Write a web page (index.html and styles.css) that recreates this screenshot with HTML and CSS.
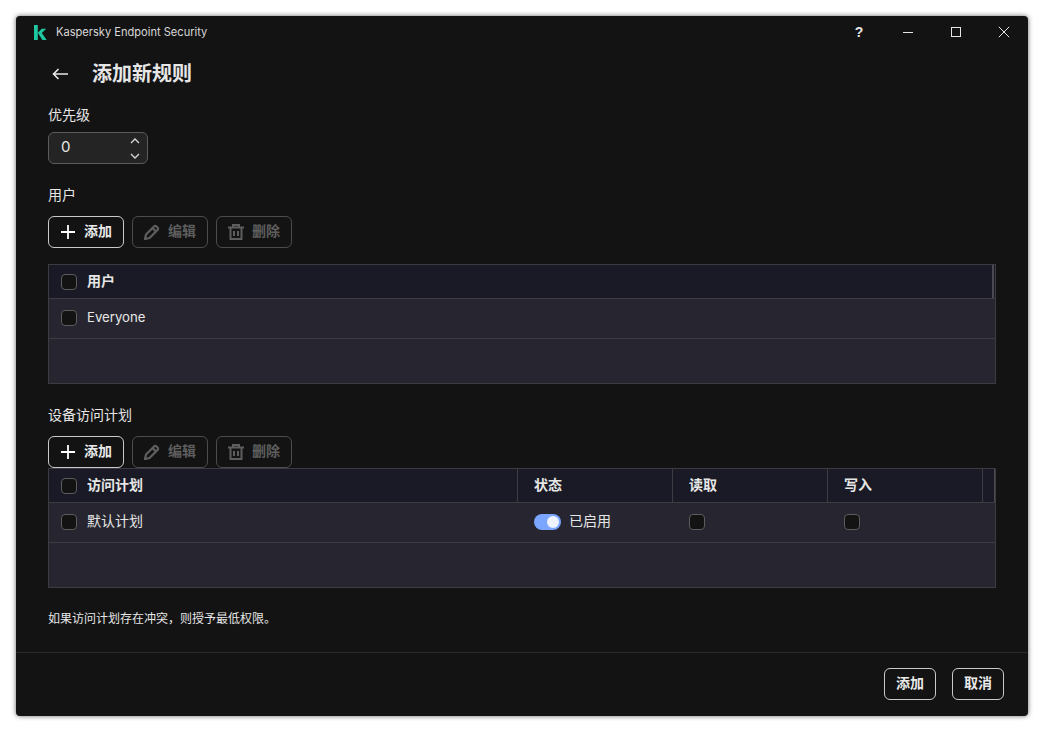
FILE: index.html
```html
<!DOCTYPE html>
<html lang="zh-CN">
<head>
    <meta charset="UTF-8">
    <title>Kaspersky Endpoint Security</title>
    <link rel="stylesheet" href="styles.css">
</head>
<body>
    <div class="window">
        <div class="titlebar">
            <svg class="logo" width="13" height="15" viewBox="0 0 13 15"><path d="M0 0h3.800v15H0zM3.800 7.800 7.800 3.800h4.400L7.800 8.100l4.900 6.900H8.400z" fill="#1ec8a2"/></svg>
            <span class="app-name">Kaspersky Endpoint Security</span>
            <div class="win-controls">
                <span class="win-btn help">?</span>
                <span class="win-btn"><svg width="12" height="12" viewBox="0 0 12 12"><path d="M1 6.500h10" stroke="#e6e6e6" fill="none"/></svg></span>
                <span class="win-btn"><svg width="12" height="12" viewBox="0 0 12 12"><rect x="1.500" y="1.500" width="9" height="9" stroke="#e6e6e6" fill="none"/></svg></span>
                <span class="win-btn"><svg width="12" height="12" viewBox="0 0 12 12"><path d="M.8.8l10.400 10.400M11.200.8.8 11.200" stroke="#e6e6e6" fill="none"/></svg></span>
            </div>
        </div>

        <div class="content">
            <div class="page-head">
                <svg width="16" height="12" viewBox="0 0 16 12"><path d="M16 6H1.500M6.500 1 1.500 6l5 5" stroke="#e8e8e8" stroke-width="1.600" fill="none"/></svg>
                <h1>添加新规则</h1>
            </div>

            <div class="label">优先级</div>
            <div class="spinner">
                <span class="spin-value">0</span>
                <div class="spin-arrows">
                    <svg width="10" height="6" viewBox="0 0 10 6"><path d="M1 5l4-4 4 4" stroke="#d8d8d8" stroke-width="1.300" fill="none"/></svg>
                    <svg width="10" height="6" viewBox="0 0 10 6"><path d="M1 1l4 4 4-4" stroke="#d8d8d8" stroke-width="1.300" fill="none"/></svg>
                </div>
            </div>

            <div class="label section-label">用户</div>
            <div class="toolbar">
                <button class="btn"><svg width="16" height="16" viewBox="0 0 16 16"><path d="M8 1v14M1 8h14" stroke="#fff" stroke-width="1.800" fill="none"/></svg><span>添加</span></button>
                <button class="btn disabled"><svg width="16" height="16" viewBox="0 0 16 16"><path d="M1 15l1-4.500L10 2.500a1.800 1.800 0 0 1 2.500 0l1 1a1.800 1.800 0 0 1 0 2.500L5.500 14zM8.500 4 12 7.500" stroke="#5e5e5e" stroke-width="2.200" fill="none"/></svg><span>编辑</span></button>
                <button class="btn disabled"><svg width="16" height="16" viewBox="0 0 16 16"><path d="M0 3.500h16M5 3.500V1h6v2.500M2.500 3.500V15h11V3.500M6 7v5M10 7v5" stroke="#5e5e5e" stroke-width="2" fill="none"/></svg><span>删除</span></button>
            </div>
            <div class="table users-table">
                <div class="row head">
                    <div class="cell"><span class="check"></span><span class="txt">用户</span></div>
                    <div class="cell end"></div>
                </div>
                <div class="row">
                    <div class="cell"><span class="check"></span><span class="txt latin">Everyone</span></div>
                </div>
            </div>

            <div class="label section-label">设备访问计划</div>
            <div class="toolbar">
                <button class="btn"><svg width="16" height="16" viewBox="0 0 16 16"><path d="M8 1v14M1 8h14" stroke="#fff" stroke-width="1.800" fill="none"/></svg><span>添加</span></button>
                <button class="btn disabled"><svg width="16" height="16" viewBox="0 0 16 16"><path d="M1 15l1-4.500L10 2.500a1.800 1.800 0 0 1 2.500 0l1 1a1.800 1.800 0 0 1 0 2.500L5.500 14zM8.500 4 12 7.500" stroke="#5e5e5e" stroke-width="2.200" fill="none"/></svg><span>编辑</span></button>
                <button class="btn disabled"><svg width="16" height="16" viewBox="0 0 16 16"><path d="M0 3.500h16M5 3.500V1h6v2.500M2.500 3.500V15h11V3.500M6 7v5M10 7v5" stroke="#5e5e5e" stroke-width="2" fill="none"/></svg><span>删除</span></button>
            </div>
            <div class="table plans-table">
                <div class="row head">
                    <div class="cell"><span class="check"></span><span class="txt">访问计划</span></div>
                    <div class="cell"><span class="txt">状态</span></div>
                    <div class="cell"><span class="txt">读取</span></div>
                    <div class="cell"><span class="txt">写入</span></div>
                    <div class="cell end"></div>
                </div>
                <div class="row">
                    <div class="cell"><span class="check"></span><span class="txt">默认计划</span></div>
                    <div class="cell"><span class="toggle"></span><span class="txt">已启用</span></div>
                    <div class="cell"><span class="check"></span></div>
                    <div class="cell"><span class="check"></span></div>
                </div>
            </div>

            <p class="note">如果访问计划存在冲突，则授予最低权限。</p>
        </div>

        <div class="footer">
            <button class="btn"><span>添加</span></button>
            <button class="btn"><span>取消</span></button>
        </div>
    </div>
</body>
</html>
```

FILE: styles.css
```css
* {
    box-sizing: border-box;
}

body {
    margin: 0;
    padding: 16px;
    background-color: #fff;
    color: #e6e6e6;
    font-family: Inter, "Noto Sans CJK SC", sans-serif;
    font-size: 14px;
}

.window {
    display: flex;
    flex-direction: column;
    width: 1012px;
    height: 700px;
    background-color: #131313;
    border-radius: 4px;
    box-shadow: 0 0 5px rgba(0, 0, 0, 0.6);
}

.titlebar {
    display: flex;
    align-items: center;
    height: 32px;
    padding-left: 18px;
    flex-shrink: 0;
}

.logo {
    margin-right: 9px;
}

.app-name {
    font-size: 11.100px;
    color: #d8d8d8;
}

.win-controls {
    display: flex;
    margin-left: auto;
}

.win-btn {
    display: flex;
    align-items: center;
    justify-content: center;
    width: 48px;
    height: 32px;
}

.help {
    padding-right: 2px;
    font-weight: 700;
    font-size: 14px;
    font-family: "Liberation Sans", sans-serif;
}

.content {
    flex: 1;
    padding: 1px 32px 0;
}

.page-head {
    display: flex;
    align-items: center;
    height: 50px;
    padding-left: 4px;
}

.page-head h1 {
    margin: 0 0 0 24px;
    font-size: 20px;
    line-height: 50px;
    font-weight: 700;
}

.label {
    height: 24px;
    margin-top: 4px;
    line-height: 24px;
}

.spinner {
    display: flex;
    align-items: center;
    justify-content: space-between;
    width: 100px;
    height: 32px;
    margin-top: 5px;
    padding: 0 7px 0 12px;
    background-color: #242424;
    border: 1px solid #5c5c5c;
    border-radius: 6px;
    font-size: 15px;
}

.spin-value {
    margin-bottom: 3px;
}

.spin-arrows {
    display: flex;
    flex-direction: column;
    gap: 9px;
}

.spin-arrows svg {
    display: block;
}

.section-label {
    margin-top: 19px;
}

.toolbar {
    display: flex;
    gap: 8px;
    margin-top: 9px;
}

.btn {
    display: inline-flex;
    align-items: center;
    justify-content: center;
    gap: 8px;
    height: 32px;
    min-width: 52px;
    padding: 0 11px;
    background: none;
    border: 1px solid #c9c9c9;
    border-radius: 6px;
    color: #e8e8e8;
    font-family: inherit;
    font-size: 14px;
    font-weight: 700;
}

.btn span {
    margin-bottom: 4px;
}

.toolbar .btn {
    width: 76px;
    padding: 0;
}

.btn.disabled {
    border-color: #4c4c4c;
    color: #5e5e5e;
}

.table {
    height: 120px;
    background-color: #272630;
    border: 1px solid #3c3c40;
}

.users-table {
    margin-top: 16px;
}

.row {
    display: grid;
    height: 40px;
    border-bottom: 1px solid #3c3c42;
}

.users-table .row {
    grid-template-columns: 943px 3px;
}

.plans-table .row {
    grid-template-columns: 468px 155px 155px 155px 13px;
}

.row.head {
    height: 34px;
    background-color: #191a25;
    font-weight: 700;
}

.cell {
    display: flex;
    align-items: center;
    padding-left: 12px;
    min-width: 0;
}

.row:not(.head) .cell {
    padding-bottom: 1px;
}

.cell + .cell {
    padding-left: 16px;
}

/* body cells have no divider, so they sit 1px further in */
.row:not(.head) .cell + .cell {
    padding-left: 17px;
}

.head .cell + .cell {
    border-left: 1px solid #3c3c42;
}

.head .cell.end {
    padding: 0;
}

.users-table .head .cell.end {
    border-left: 2px solid #4a4a50;
}

.plans-table .head .cell.end {
    border-right: 1px solid #4a4a50;
}

.txt {
    margin-bottom: 4px;
}

.latin {
    margin-bottom: 3px;
    font-size: 13.200px;
}

.check {
    width: 16px;
    height: 16px;
    margin-right: 10px;
    flex-shrink: 0;
    background-color: #131313;
    border: 1px solid #5c5c5c;
    border-radius: 4px;
}

.toggle {
    position: relative;
    width: 27px;
    height: 16px;
    margin-right: 8px;
    flex-shrink: 0;
    background-color: #7ba6ff;
    border-radius: 8px;
}

/* knob */
.toggle::after {
    content: "";
    position: absolute;
    top: 2px;
    right: 2px;
    width: 12px;
    height: 12px;
    background-color: #eef3ff;
    border-radius: 50%;
}

.note {
    margin: 22px 0 0;
    font-size: 12px;
    line-height: 18px;
}

.footer {
    display: flex;
    justify-content: flex-end;
    gap: 16px;
    height: 64px;
    padding: 15px 24px 0 0;
    border-top: 1px solid #2a2a2a;
    flex-shrink: 0;
}
```
